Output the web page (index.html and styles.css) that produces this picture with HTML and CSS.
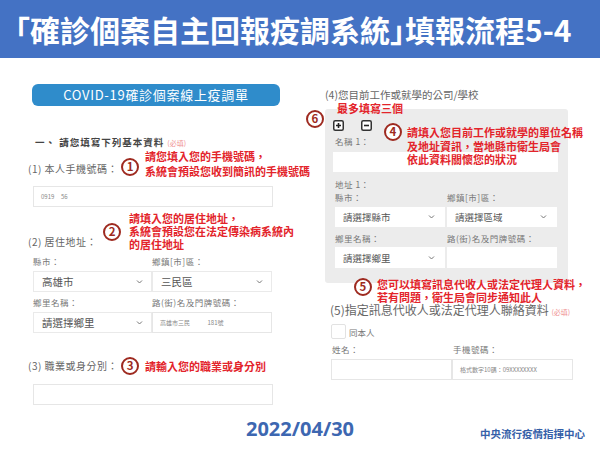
FILE: index.html
```html
<!DOCTYPE html>
<html lang="zh-Hant">
<head>
<meta charset="UTF-8">
<meta name="viewport" content="width=device-width, initial-scale=1.0">
<title>填報流程5-4</title>
<link rel="stylesheet" href="styles.css">
</head>
<body>

<header class="banner">
    <h1>「確診個案自主回報疫調系統」填報流程5-4</h1>
</header>

<main class="slide">
    <section class="col col-left">
        <div class="pill">COVID-19確診個案線上疫調單</div>
        <h2 class="section-title">一、 請您填寫下列基本資料 <span class="req">(必填)</span></h2>

        <div class="q-row q1">
            <span class="q-label">(1) 本人手機號碼：</span>
            <span class="badge">1</span>
            <p class="note">請您填入您的手機號碼，<br>系統會預設您收到簡訊的手機號碼</p>
        </div>
        <div class="field wide q1-field"><span class="tiny">0919 &nbsp; &nbsp; 56</span></div>

        <div class="q-row q2">
            <span class="q-label">(2) 居住地址：</span>
            <span class="badge">2</span>
            <p class="note">請填入您的居住地址，<br>系統會預設您在法定傳染病系統內<br>的居住地址</p>
        </div>
        <div class="addr">
            <span class="sub-label">縣市：</span>
            <span class="sub-label">鄉鎮[市]區：</span>
            <div class="select">高雄市<svg width="7" height="4" viewBox="0 0 7 4"><path d="M1 .5l2.5 2.5L6 .5" fill="none" stroke="#777" stroke-width="1"/></svg></div>
            <div class="select">三民區<svg width="7" height="4" viewBox="0 0 7 4"><path d="M1 .5l2.5 2.5L6 .5" fill="none" stroke="#777" stroke-width="1"/></svg></div>
            <span class="sub-label">鄉里名稱：</span>
            <span class="sub-label">路(街)名及門牌號碼：</span>
            <div class="select">請選擇鄉里<svg width="7" height="4" viewBox="0 0 7 4"><path d="M1 .5l2.5 2.5L6 .5" fill="none" stroke="#777" stroke-width="1"/></svg></div>
            <div class="field"><span class="tiny">高雄市三民 &nbsp; &nbsp; &nbsp; &nbsp; &nbsp; &nbsp; 181號</span></div>
        </div>

        <div class="q-row q3">
            <span class="q-label">(3) 職業或身分別：</span>
            <span class="badge">3</span>
            <p class="note">請輸入您的職業或身分別</p>
        </div>
        <div class="field wide q3-field"></div>
    </section>

    <section class="col col-right">
        <p class="q-title">(4)您目前工作或就學的公司/學校</p>
        <div class="panel">
            <div class="tools">
                <svg width="11" height="11" viewBox="0 0 11 11"><rect x="0.75" y="0.75" width="9.5" height="9.5" rx="1.5" fill="#fff" stroke="#333" stroke-width="1.5"/><path d="M3 5.5h5M5.5 3v5" stroke="#222" stroke-width="1.6"/></svg>
                <svg width="11" height="11" viewBox="0 0 11 11"><rect x="0.75" y="0.75" width="9.5" height="9.5" rx="1.5" fill="#fff" stroke="#333" stroke-width="1.5"/><path d="M3 5.5h5" stroke="#222" stroke-width="1.6"/></svg>
            </div>
            <span class="sub-label name-label">名稱 1：</span>
            <div class="field name-field"></div>
            <span class="sub-label addr-head">地址 1：</span>
            <div class="addr addr-work">
                <span class="sub-label">縣市：</span>
                <span class="sub-label">鄉鎮[市]區：</span>
                <div class="select">請選擇縣市<svg width="7" height="4" viewBox="0 0 7 4"><path d="M1 .5l2.5 2.5L6 .5" fill="none" stroke="#777" stroke-width="1"/></svg></div>
                <div class="select">請選擇區域<svg width="7" height="4" viewBox="0 0 7 4"><path d="M1 .5l2.5 2.5L6 .5" fill="none" stroke="#777" stroke-width="1"/></svg></div>
                <span class="sub-label">鄉里名稱：</span>
                <span class="sub-label">路(街)名及門牌號碼：</span>
                <div class="select">請選擇鄉里<svg width="7" height="4" viewBox="0 0 7 4"><path d="M1 .5l2.5 2.5L6 .5" fill="none" stroke="#777" stroke-width="1"/></svg></div>
                <div class="field"></div>
            </div>
        </div>

        <p class="q-title q5">(5)指定訊息代收人或法定代理人聯絡資料 <span class="req">(必填)</span></p>
        <label class="check-row"><span class="checkbox"></span>同本人</label>
        <div class="contact">
            <span class="sub-label">姓名：</span>
            <span class="sub-label">手機號碼：</span>
            <div class="field"></div>
            <div class="field"><span class="tiny">格式數字10碼：09XXXXXXXX</span></div>
        </div>

        <!-- callouts over the form -->
        <span class="badge mark6">6</span>
        <p class="note limit">最多填寫三個</p>
        <div class="callout call4">
            <span class="badge">4</span>
            <p class="note">請填入您目前工作或就學的單位名稱<br>及地址資訊，當地縣市衛生局會<br>依此資料關懷您的狀況</p>
        </div>
        <div class="callout call5">
            <span class="badge">5</span>
            <p class="note">您可以填寫訊息代收人或法定代理人資料，<br>若有問題，衛生局會同步通知此人</p>
        </div>
    </section>
</main>

<footer class="foot">
    <span></span>
    <span class="date">2022/04/30</span>
    <span class="org">中央流行疫情指揮中心</span>
</footer>

</body>
</html>
```

FILE: styles.css
```css
* {
    box-sizing: border-box;
    margin: 0;
    padding: 0;
}

body {
    width: 600px;
    height: 450px;
    overflow: hidden;
    background: #fff;
    font-family: "Noto Sans CJK TC", "Noto Sans", sans-serif;
    color: #666;
}

.banner {
    height: 58px;
    background: #4472c4;
    display: flex;
    align-items: center;
    padding-left: 15px;
}

.banner h1 {
    color: #fff;
    font-size: 30px;
    font-weight: 700;
    line-height: 1;
    font-feature-settings: "halt";
    white-space: nowrap;
}

.slide {
    display: flex;
    height: 352px;
}

.col {
    width: 300px;
    flex: none;
}

.col-left {
    padding-left: 28px;
}

.col-right {
    position: relative;
    padding-left: 25px;
}

.pill {
    margin: 26px 0 0 4px;
    width: 248px;
    height: 22px;
    line-height: 22px;
    border-radius: 6px;
    background: #2f8ccb;
    color: #fff;
    text-align: center;
    font-size: 13px;
    letter-spacing: 0.7px;
}

.section-title {
    margin: 30px 0 0 7px;
    font-size: 9.5px;
    line-height: 12px;
    letter-spacing: 1px;
    color: #444;
    font-weight: 700;
}

.req {
    font-size: 7px;
    font-weight: 400;
    color: #ef8f8f;
    letter-spacing: 0;
}

/* question rows with red callouts */
.q-row {
    display: flex;
    align-items: center;
    white-space: nowrap;
}

.q-label {
    font-size: 10px;
    line-height: 14px;
    letter-spacing: 0.5px;
    color: #666;
}

.badge {
    width: 18px;
    height: 18px;
    flex: none;
    border: 2px solid #9e2a20;
    border-radius: 50%;
    background: #fff;
    color: #9e2a20;
    font-size: 11.5px;
    font-weight: 700;
    line-height: 1;
    display: flex;
    align-items: center;
    justify-content: center;
}

.note {
    color: #e3242b;
    font-size: 11px;
    font-weight: 700;
    line-height: 13px;
    white-space: nowrap;
}

.q-row .badge {
    margin: 0 6px 0 3px;
}

.q1 .q-label {
    padding-top: 10px;
}

.q1 .badge {
    margin-top: 6px;
}

.q1 .note {
    line-height: 15px;
}

.q2 {
    margin-top: 5px;
}

.q2 .q-label {
    align-self: flex-end;
    margin-bottom: 2px;
}

.q2 .badge {
    margin: 0 8px 0 6px;
}

.q3 {
    margin-top: 24px;
}

/* inputs */
.field {
    height: 21px;
    background: #fff;
    border: 1px solid #e6e6e6;
    display: flex;
    align-items: center;
    padding-left: 7px;
}

.wide {
    width: 240px;
    margin-left: 5px;
}

.q1-field {
    margin-top: 7px;
}

.q3-field {
    margin-top: 9px;
}

.tiny {
    font-size: 6px;
    color: #888;
    white-space: pre;
}

.sub-label {
    font-size: 8.5px;
    line-height: 12px;
    letter-spacing: 0.5px;
    color: #777;
}

.addr {
    display: grid;
    grid-template-columns: 119px 120px;
    margin: 4px 0 0 5px;
}

.addr .sub-label:nth-of-type(3),
.addr .sub-label:nth-of-type(4) {
    margin-top: 4px;
}

.addr .select,
.addr .field {
    margin-top: 4px;
}

.select {
    height: 21px;
    background: #fff;
    border: 1px solid #eaeaea;
    display: flex;
    align-items: center;
    justify-content: space-between;
    padding: 0 8px;
    font-size: 10.5px;
    color: #555;
}

/* right column */
.q-title {
    margin-top: 30px;
    font-size: 10.5px;
    line-height: 14px;
    color: #666;
    white-space: nowrap;
}

.panel {
    margin-top: 7px;
    width: 243px;
    background: #ececec;
    border-radius: 3px;
    padding: 11px 10px 15px 8px;
    display: flex;
    flex-direction: column;
}

.tools {
    display: flex;
    gap: 17px;
    height: 11px;
}

.name-label {
    margin: 4px 0 0 2px;
}

.name-field {
    margin-top: 5px;
    height: 20px;
    border: none;
}

.addr-head {
    margin: 6px 0 0 2px;
}

.addr-work {
    grid-template-columns: 110px 110px;
    column-gap: 2px;
    margin: 1px 0 0 2px;
}

.addr-work .select,
.addr-work .field {
    border: none;
    height: 20px;
    padding-left: 8px;
    font-size: 9.5px;
}

.addr-work .select {
    padding-right: 10px;
}

.addr-work .sub-label:nth-of-type(3),
.addr-work .sub-label:nth-of-type(4) {
    margin-top: 5px;
}

.addr-work .select:nth-of-type(3),
.addr-work .field {
    margin-top: 3px;
    height: 21px;
}

.q5 {
    margin: 19px 0 0 5px;
    font-size: 12px;
    line-height: 16px;
}

.check-row {
    display: flex;
    align-items: center;
    gap: 3px;
    margin: 4px 0 0 6px;
    height: 15px;
    font-size: 8.5px;
    color: #777;
}

.checkbox {
    width: 15px;
    height: 15px;
    border: 1px solid #e2e2e2;
    border-radius: 2px;
    background: #fff;
}

.contact {
    display: grid;
    grid-template-columns: 121px 121px;
    margin: 4px 0 0 6px;
}

.contact .sub-label {
    padding-left: 1px;
}

.contact .field {
    margin-top: 4px;
}

/* callouts lying over the form */
.mark6 {
    position: absolute;
    left: 6px;
    top: 52px;
}

.limit {
    position: absolute;
    left: 37px;
    top: 44px;
}

.callout {
    position: absolute;
    display: flex;
    align-items: flex-start;
    gap: 5px;
}

.call4 {
    left: 84px;
    top: 65px;
}

.call4 .note {
    margin-top: 3px;
    line-height: 13.5px;
}

.call5 {
    left: 54px;
    top: 220px;
}

/* footer */
.foot {
    height: 40px;
    display: grid;
    grid-template-columns: 1fr auto 1fr;
    align-items: center;
}

.date {
    font-family: "Noto Sans", sans-serif;
    font-size: 20px;
    font-weight: 700;
    color: #3d67b1;
    margin-top: -4px;
}

.org {
    justify-self: end;
    padding-right: 15px;
    margin-top: 6px;
    font-size: 10.5px;
    font-weight: 700;
    color: #3560a8;
}
```
